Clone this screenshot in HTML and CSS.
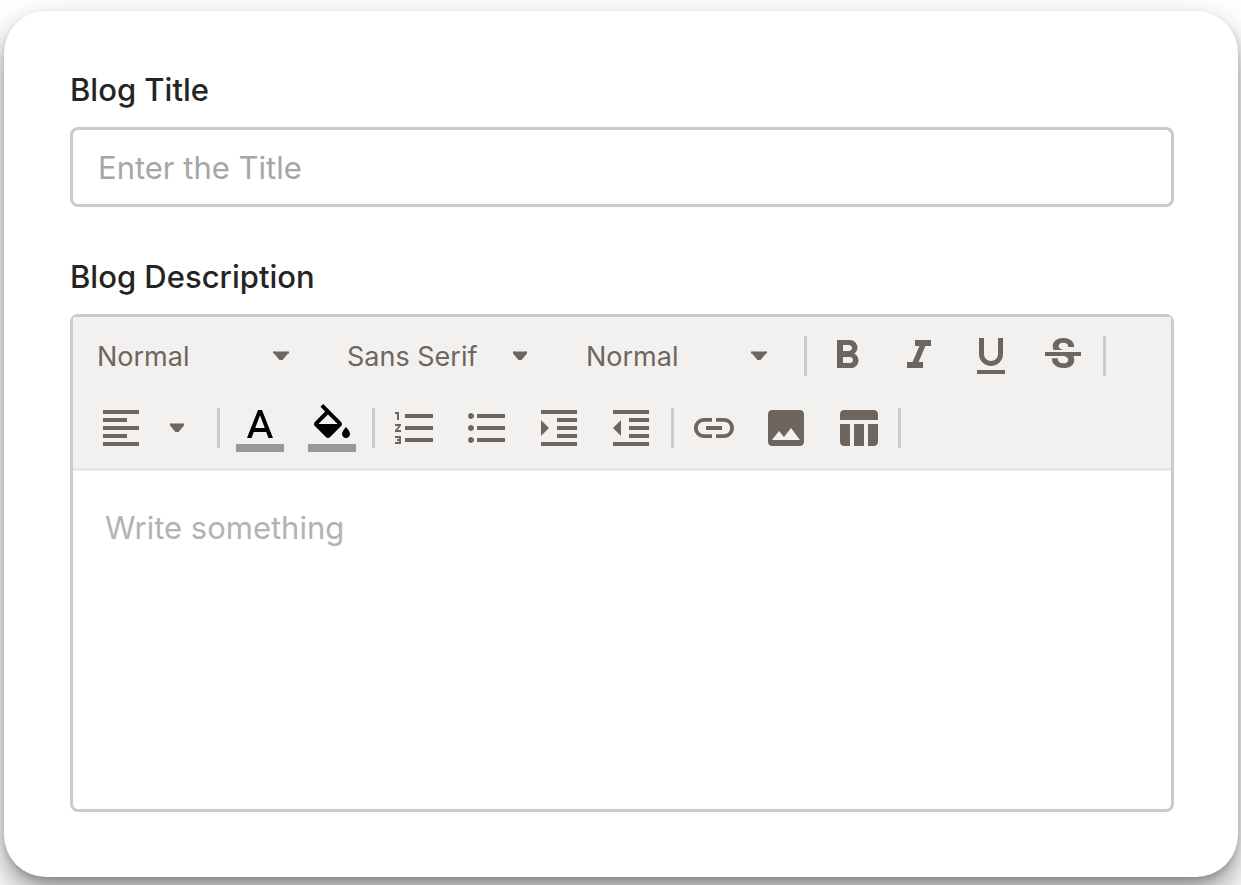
FILE: index.html
```
<!DOCTYPE html>
<html lang="en">
  <head>
    <meta charset="UTF-8" />
    <meta name="viewport" content="width=device-width, initial-scale=1.0" />
    <title>Blog</title>
    <link rel="stylesheet" href="styles.css">
  </head>
  <body>
    <form class="card" action="">
      <div class="field">
        <label for="title">Blog Title</label>
        <input class="title-input" type="text" id="title" name="title" placeholder="Enter the Title" />
      </div>
      <div class="field field-grow">
        <label for="description">Blog Description</label>
        <div class="editor">
          <div class="toolbar">
            <div class="group pickers">
              <div class="picker picker-wide">
                <select aria-label="Block type"><option>Normal</option></select>
                <svg class="caret" viewBox="0 0 24 24"><path d="M5 7l1 .5h12l1-.5 1 1v1.500h-1L13.500 16h-3L5 9.500H4V8z" /></svg>
              </div>
              <div class="picker">
                <select aria-label="Font"><option>Sans Serif</option></select>
                <svg class="caret" viewBox="0 0 24 24"><path d="M6 7l1 .5h10l1-.5 1 1v1.500L13.500 16h-3L5 9.500V8z" /></svg>
              </div>
              <div class="picker">
                <select aria-label="Font size"><option>Normal</option></select>
                <svg class="caret" viewBox="0 0 24 24"><path d="M5 7l1 .5h12l1-.5 1 1v1.500h-1L13.500 16h-3L5 9.500H4V8z" /></svg>
              </div>
            </div>
            <div class="group">
              <button type="button" aria-label="Bold">
                <svg class="icon" viewBox="0 0 24 24"><path d="M15.6 10.79c.97-.67 1.65-1.77 1.65-2.79 0-2.26-1.75-4-4-4H7v14h7.04c2.09 0 3.71-1.7 3.71-3.79 0-1.52-.86-2.82-2.15-3.42zM10 6.5h3c.83 0 1.5.67 1.5 1.5s-.67 1.5-1.5 1.5h-3v-3zm3.5 9H10v-3h3.5c.83 0 1.5.67 1.5 1.5s-.67 1.5-1.5 1.5z" /></svg>
              </button>
              <button type="button" aria-label="Italic">
                <svg class="icon" viewBox="0 0 24 24"><path d="M10 4v3h2.21l-3.42 8H6v3h8v-3h-2.21l3.42-8H18V4z" /></svg>
              </button>
              <button type="button" aria-label="Underline">
                <svg class="icon" viewBox="0 0 24 24"><path d="M12 17c3.31 0 6-2.69 6-6V3h-2.5v8c0 1.93-1.57 3.5-3.5 3.5S8.5 12.93 8.5 11V3H6v8c0 3.31 2.69 6 6 6zm-7 2v2h14v-2H5z" /></svg>
              </button>
              <button type="button" aria-label="Strikethrough">
                <svg class="icon" viewBox="0 0 24 24"><path d="M7.24 8.75c-.26-.48-.39-1.03-.39-1.67 0-.61.13-1.16.4-1.67.26-.5.63-.93 1.11-1.29.48-.35 1.05-.63 1.7-.83.66-.19 1.39-.29 2.18-.29.81 0 1.54.11 2.21.34.66.22 1.23.54 1.69.94.47.4.83.88 1.08 1.43.25.55.38 1.15.38 1.81h-3.01c0-.31-.05-.59-.15-.85-.09-.27-.24-.49-.44-.68-.2-.19-.45-.33-.75-.44-.3-.1-.66-.16-1.06-.16-.39 0-.74.04-1.03.13-.29.09-.53.21-.72.36-.19.16-.34.34-.44.55-.1.21-.15.43-.15.66 0 .48.25.88.74 1.21.38.25.77.48 1.41.7H7.39c-.05-.08-.11-.17-.15-.25zM21 12v-2H3v2h9.62c.18.07.4.14.55.2.37.17.66.34.87.51.21.17.35.36.43.57.07.2.11.43.11.69 0 .23-.05.45-.14.66-.09.2-.23.38-.42.53-.19.15-.42.26-.71.35-.29.08-.63.13-1.01.13-.43 0-.83-.04-1.18-.13s-.66-.23-.91-.42c-.25-.19-.45-.44-.59-.75-.14-.31-.25-.76-.25-1.21H6.4c0 .55.08 1.13.24 1.58.16.45.37.85.65 1.21.28.35.6.66.98.92.37.26.78.48 1.22.65.44.17.9.3 1.38.39.48.08.96.13 1.44.13.8 0 1.53-.09 2.18-.28s1.21-.45 1.67-.79c.46-.34.82-.77 1.07-1.27s.38-1.07.38-1.71c0-.6-.1-1.14-.31-1.61-.05-.11-.11-.23-.17-.33H21z" /></svg>
              </button>
            </div>
            <div class="group">
              <button class="align" type="button" aria-label="Text align">
                <svg class="icon" viewBox="0 0 24 24"><path d="M15 15H3v2h12v-2zm0-8H3v2h12V7zM3 13h18v-2H3v2zm0 8h18v-2H3v2zM3 3v2h18V3H3z" /></svg>
                <svg class="caret" viewBox="0 0 24 24"><path d="M6 7l1 .5h10l1-.5 1 1v1.500L13.500 16h-3L5 9.500V8z" /></svg>
              </button>
            </div>
            <div class="group">
              <button class="color" type="button" aria-label="Text color">
                <svg class="icon" viewBox="0 0 24 24"><path d="M11 3L5.5 17h2.25l1.12-3h6.25l1.12 3h2.25L13 3h-2zm-1.38 9L12 5.67 14.38 12H9.62z" /><path class="swatch" d="M0 20h24v4H0z" /></svg>
              </button>
              <button class="color" type="button" aria-label="Background color">
                <svg class="icon" viewBox="0 0 24 24"><path d="M16.56 8.94L7.62 0 6.21 1.41l2.38 2.38-5.15 5.15c-.59.59-.59 1.54 0 2.12l5.5 5.5c.29.29.68.44 1.06.44s.77-.15 1.06-.44l5.5-5.5c.59-.58.59-1.53 0-2.12zM5.21 10L10 5.21 14.79 10H5.21zM19 11.5s-2 2.17-2 3.5c0 1.1.9 2 2 2s2-.9 2-2c0-1.33-2-3.5-2-3.5z" /><path class="swatch" d="M0 20h24v4H0z" /></svg>
              </button>
            </div>
            <div class="group">
              <button type="button" aria-label="Numbered list">
                <svg class="icon" viewBox="0 0 24 24"><path d="M2 17h2v.5H3v1h1v.5H2v1h3v-4H2v1zm1-9h1V4H2v1h1v3zm-1 3h1.8L2 13.1v.9h3v-1H3.2L5 10.9V10H2v1zm5-6v2h14V5H7zm0 14h14v-2H7v2zm0-6h14v-2H7v2z" /></svg>
              </button>
              <button type="button" aria-label="Bulleted list">
                <svg class="icon" viewBox="0 0 24 24"><path d="M4 10.5c-.83 0-1.5.67-1.5 1.5s.67 1.5 1.5 1.5 1.5-.67 1.5-1.5-.67-1.5-1.5-1.5zm0-6c-.83 0-1.5.67-1.5 1.5S3.17 7.5 4 7.5 5.5 6.83 5.5 6 4.83 4.5 4 4.5zm0 12c-.83 0-1.5.68-1.5 1.5s.68 1.5 1.5 1.5 1.5-.68 1.5-1.5-.67-1.5-1.5-1.5zM7 19h14v-2H7v2zm0-6h14v-2H7v2zm0-8v2h14V5H7z" /></svg>
              </button>
              <button type="button" aria-label="Increase indent">
                <svg class="icon" viewBox="0 0 24 24"><path d="M3 21h18v-2H3v2zM3 8v8l4-4-4-4zm8 9h10v-2H11v2zM3 3v2h18V3H3zm8 6h10V7H11v2zm0 4h10v-2H11v2z" /></svg>
              </button>
              <button type="button" aria-label="Decrease indent">
                <svg class="icon" viewBox="0 0 24 24"><path d="M11 17h10v-2H11v2zm-8-5l4 4V8l-4 4zm0 9h18v-2H3v2zM3 3v2h18V3H3zm8 6h10V7H11v2zm0 4h10v-2H11v2z" /></svg>
              </button>
            </div>
            <div class="group">
              <button type="button" aria-label="Link">
                <svg class="icon" viewBox="0 0 24 24"><path d="M3.9 12c0-1.71 1.39-3.1 3.1-3.1h4V7H7c-2.76 0-5 2.24-5 5s2.24 5 5 5h4v-1.9H7c-1.71 0-3.1-1.39-3.1-3.1zM8 13h8v-2H8v2zm9-6h-4v1.9h4c1.71 0 3.1 1.39 3.1 3.1s-1.39 3.1-3.1 3.1h-4V17h4c2.76 0 5-2.24 5-5s-2.24-5-5-5z" /></svg>
              </button>
              <button type="button" aria-label="Image">
                <svg class="icon" viewBox="0 0 24 24"><path d="M21 19V5c0-1.1-.9-2-2-2H5c-1.1 0-2 .9-2 2v14c0 1.1.9 2 2 2h14c1.1 0 2-.9 2-2zM8.5 13.5l2.5 3.01L14.5 12l4.5 6H5l3.5-4.5z" /></svg>
              </button>
              <button type="button" aria-label="Table">
                <svg class="icon" viewBox="0 0 24 24"><path d="M10 10h5v11h-5V10zM17 21h3c1.1 0 2-.9 2-2v-9h-5v11zm3-18H5c-1.1 0-2 .9-2 2v3h19V5c0-1.1-.9-2-2-2zM3 19c0 1.1.9 2 2 2h3V10H3v9z" /></svg>
              </button>
            </div>
          </div>
          <textarea class="editor-body" id="description" name="description" placeholder="Write something"></textarea>
        </div>
      </div>
    </form>
  </body>
</html>
```
FILE: styles.css
```
* {
  box-sizing: border-box;
}
body {
  margin: 0;
  padding: 11px 3px 8px 4px;
  min-height: 100vh;
  display: flex;
  background-color: white;
  color: #252423;
  font-family: Inter, "Liberation Sans", sans-serif;
  font-size: 31px;
}
.card {
  flex: 1;
  display: flex;
  flex-direction: column;
  gap: 50px;
  padding: 59px 64px 65px 66px;
  border-radius: 42px;
  background-color: white;
  box-shadow: 0 16px 32px rgba(0, 0, 0, 0.42), 0 4px 6px rgba(0, 0, 0, 0.15);
}
.field {
  display: flex;
  flex-direction: column;
}
.field-grow {
  flex: 1;
}
label {
  line-height: 40px;
  margin-bottom: 17px;
  font-weight: 500;
}
input,
select,
textarea,
button {
  font: inherit;
  border: none;
  outline: none;
  background: none;
  margin: 0;
  padding: 0;
}
.title-input {
  width: 100%;
  height: 80px;
  padding: 0 25px;
  border: 3px solid #cbcbc8;
  border-radius: 8px;
}
.title-input::placeholder {
  color: #a6a6a4;
}
.editor {
  flex: 1;
  display: flex;
  flex-direction: column;
  border: 3px solid #cbcbc8;
  border-radius: 8px;
}
.toolbar {
  display: flex;
  flex-wrap: wrap;
  padding: 3px 24px 4px;
  background-color: #f3f1f0;
  border-bottom: 3px solid #e5e5e4;
}
.group {
  display: flex;
  align-items: center;
  gap: 24px;
  height: 72px;
  margin-right: 16px;
  color: #6e665e;
}
.group::after {
  content: "";
  width: 3px;
  height: 40px;
  margin-left: -8px;
  background-color: #cbcac8;
}
.pickers {
  gap: 54px;
}
.pickers::after {
  margin-left: -21px;
}
.picker {
  display: grid;
  align-items: center;
  width: 185px;
}
.picker-wide {
  width: 196px;
}
.picker select,
.picker .caret {
  grid-area: 1 / 1;
}
.picker select {
  appearance: none;
  height: 48px;
  color: inherit;
  font-size: 27px;
}
.picker .caret {
  justify-self: end;
  pointer-events: none;
}
button {
  display: flex;
  align-items: center;
  color: inherit;
}
.align {
  gap: 20px;
  padding-right: 12px;
}
.color {
  color: black;
}
.icon {
  width: 48px;
  height: 48px;
  fill: currentColor;
}
.caret {
  width: 24px;
  height: 24px;
  fill: currentColor;
}
.icon .swatch {
  fill: #999997;
}
.editor-body {
  flex: 1;
  width: 100%;
  padding: 37px 32px;
  line-height: 40px;
  resize: none;
}
.editor-body::placeholder {
  color: #b3b3b1;
}
```
